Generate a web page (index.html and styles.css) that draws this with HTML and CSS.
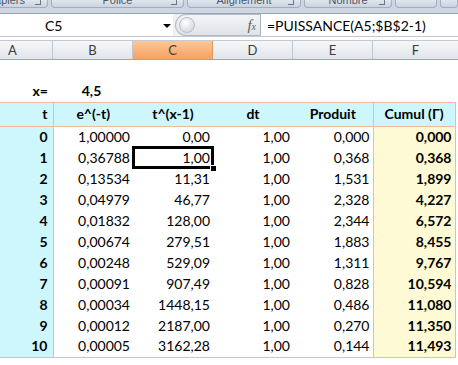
FILE: index.html
```html
<!DOCTYPE html>
<html lang="fr">
<head>
  <meta charset="UTF-8"/>
  <title>Fonction Gamma</title>
  <link rel="stylesheet" href="styles.css">
</head>
<body>

<div class="ribbon">
  <div class="group first"><span>Presse-papiers</span><i class="launcher"></i></div>
  <div class="group police"><span>Police</span><i class="launcher"></i></div>
  <div class="group align"><span>Alignement</span><i class="launcher"></i></div>
  <div class="group nombre"><span>Nombre</span><i class="launcher"></i></div>
  <div class="group blank"></div>
  <div class="group last"></div>
</div>

<div class="formula-bar">
  <div class="name-box">
    <span>C5</span>
    <i class="drop"></i>
  </div>
  <div class="grip">
    <span class="knob"></span>
    <span class="fx">f<small>x</small></span>
  </div>
  <div class="formula">=PUISSANCE(A5;$B$2-1)</div>
</div>

<div class="col-heads">
  <div class="col a">A</div>
  <div class="col">B</div>
  <div class="col active">C</div>
  <div class="col">D</div>
  <div class="col">E</div>
  <div class="col f">F</div>
</div>

<table class="sheet">
  <colgroup>
    <col class="w-a"><col class="w-n"><col class="w-n"><col class="w-n"><col class="w-n"><col class="w-f">
  </colgroup>
  <tr class="empty"><td></td><td></td><td></td><td></td><td></td><td></td></tr>
  <tr class="param">
    <td class="label">x=</td><td class="center bold">4,5</td><td></td><td></td><td></td><td></td>
  </tr>
  <tr class="head">
    <td class="label">t</td>
    <td>e^(-t)</td>
    <td>t^(x-1)</td>
    <td>dt</td>
    <td>Produit</td>
    <td class="cumul">Cumul (Γ)</td>
  </tr>
  <tbody id="rows"></tbody>
</table>

<script>
  const data = [
    ["0", "1,00000", "0,00", "1,00", "0,000", "0,000"],
    ["1", "0,36788", "1,00", "1,00", "0,368", "0,368"],
    ["2", "0,13534", "11,31", "1,00", "1,531", "1,899"],
    ["3", "0,04979", "46,77", "1,00", "2,328", "4,227"],
    ["4", "0,01832", "128,00", "1,00", "2,344", "6,572"],
    ["5", "0,00674", "279,51", "1,00", "1,883", "8,455"],
    ["6", "0,00248", "529,09", "1,00", "1,311", "9,767"],
    ["7", "0,00091", "907,49", "1,00", "0,828", "10,594"],
    ["8", "0,00034", "1448,15", "1,00", "0,486", "11,080"],
    ["9", "0,00012", "2187,00", "1,00", "0,270", "11,350"],
    ["10", "0,00005", "3162,28", "1,00", "0,144", "11,493"]
  ];

  const body = document.getElementById("rows");

  data.forEach((r, i) => {
    const tr = document.createElement("tr");
    if (i === data.length - 1) tr.classList.add("last");
    tr.innerHTML = `
      <td class="label">${r[0]}</td>
      <td>${r[1]}</td>
      <td class="${i === 1 ? "selected" : ""}">${r[2]}</td>
      <td>${r[3]}</td>
      <td>${r[4]}</td>
      <td class="cumul">${r[5]}</td>
    `;
    body.appendChild(tr);
  });
</script>
</body>
</html>
```

FILE: styles.css
```css
body {
  margin: 0;
  padding: 0;
  width: 458px;
  height: 365px;
  overflow: hidden;
  background: #fff;
  font-family: Lato, "Open Sans", sans-serif;
  font-size: 14px;
  color: #000;
}

/* ribbon strip, cut off at the top */
.ribbon {
  height: 8px;
  background: #cdd6e2;
  display: flex;
  gap: 3px;
  overflow: hidden;
  padding-bottom: 5px;
  border-bottom: 1px solid #9aa5b4;
  box-sizing: content-box;
}

.group {
  position: relative;
  height: 8px;
  overflow: hidden;
  background: linear-gradient(#dfe6ef, #c9d3df);
  border: 1px solid #a3adbb;
  border-top: none;
  border-radius: 0 0 4px 4px;
  font-family: "Liberation Sans", sans-serif;
  font-size: 11px;
  color: #4a5566;
  text-align: center;
  white-space: nowrap;
  box-sizing: border-box;
}

.group span {
  display: block;
  margin-top: -6px;
  line-height: 12px;
}

.group.first { width: 50px; margin-left: -2px; }
.group.first span { position: absolute; right: 22px; top: 0; margin-top: -6px; }
.group.police { width: 133px; }
.group.align { width: 114px; }
.group.nombre { width: 88px; }
.group.blank { width: 42px; }
.group.last { flex: 1; }

.launcher {
  position: absolute;
  right: 6px;
  top: 0;
  width: 5px;
  height: 4px;
  border-right: 1px solid #6c7584;
  border-bottom: 1px solid #6c7584;
}

.formula-bar {
  height: 22px;
  display: flex;
  background: #eef1f4;
  border-bottom: 1px solid #c3c8cf;
  margin-bottom: 3px;
}

.name-box {
  width: 173px;
  background: #fff;
  display: flex;
  align-items: center;
  position: relative;
}

.name-box span {
  padding-left: 45px;
  font-size: 14px;
}

.drop {
  position: absolute;
  left: 163px;
  top: 10px;
  width: 0;
  height: 0;
  border-left: 4px solid transparent;
  border-right: 4px solid transparent;
  border-top: 4px solid #000;
}

.grip {
  width: 86px;
  display: flex;
  align-items: center;
  justify-content: space-between;
  background: linear-gradient(#f4f5f7, #dfe2e7);
  border: 1px solid #b5bbc4;
  border-right: 1px solid #a9b0ba;
  border-radius: 11px 0 0 11px;
  box-sizing: border-box;
  margin-left: 2px;
}

.knob {
  width: 14px;
  height: 14px;
  margin-left: 3px;
  border-radius: 50%;
  background: radial-gradient(circle at 40% 35%, #ffffff, #c9ced6);
  border: 1px solid #b8bec7;
}

.fx {
  font-family: "Liberation Serif", serif;
  font-style: italic;
  font-size: 15px;
  color: #5b5f66;
  padding-right: 4px;
}

.fx small {
  font-size: 10px;
}

.formula {
  flex: 1;
  background: #fff;
  display: flex;
  align-items: center;
  padding-left: 6px;
  font-size: 14px;
}

/* column letters */
.col-heads {
  display: flex;
  height: 20px;
  background: linear-gradient(#f6f7f9, #e1e4e9);
  border-top: 1px solid #c6cad0;
  border-bottom: 1px solid #9ea6b1;
  box-sizing: border-box;
}

.col {
  width: 80px;
  border-right: 1px solid #c2c7ce;
  text-align: center;
  line-height: 18px;
  color: #3c3c3c;
  font-size: 13px;
  box-sizing: border-box;
}

.col.a {
  width: 53px;
  text-align: left;
  padding-left: 8px;
}

.col.active {
  background: linear-gradient(#fbc898, #f6a060);
  border-right-color: #e19a64;
}

.col.f {
  flex: 1;
  border-right: none;
}

/* the sheet */
.sheet {
  border-collapse: collapse;
  table-layout: fixed;
  width: 455px;
}

.w-a { width: 53px; }
.w-n { width: 80px; }
.w-f { width: 82px; }

.sheet td {
  height: 21px;
  padding: 0 3px 0 0;
  text-align: right;
  white-space: nowrap;
  line-height: 20px;
  box-sizing: border-box;
}

.sheet .label {
  font-weight: bold;
  padding-right: 5px;
}

.sheet .center {
  text-align: center;
}

.sheet .bold {
  font-weight: bold;
}

.sheet .head td {
  height: 24px;
  background: #cdf7fc;
  font-weight: bold;
  text-align: center;
  padding: 0;
  border-top: 1px solid #f0b99f;
  border-bottom: 1px solid #f0b99f;
}

.sheet .head td.label {
  text-align: right;
  padding-right: 5px;
  border-right: 1px solid #f0b99f;
}

.sheet .head td.cumul {
  border-left: 1px solid #f0b99f;
  border-right: 1px solid #f0b99f;
}

#rows td.label {
  background: #cdf7fc;
  border-right: 1px solid #f0b99f;
}

#rows td.cumul {
  background: #fffad6;
  font-weight: bold;
  border-left: 1px solid #f0b99f;
  border-right: 1px solid #f0b99f;
}

#rows tr.last td {
  border-bottom: 1px solid #f0b99f;
}

.sheet td.selected {
  position: relative;
  outline: 3px solid #000;
  outline-offset: -2px;
}

.sheet td.selected::after {
  content: "";
  position: absolute;
  right: -4px;
  bottom: -4px;
  width: 5px;
  height: 5px;
  background: #000;
  border: 1px solid #fff;
}
```
